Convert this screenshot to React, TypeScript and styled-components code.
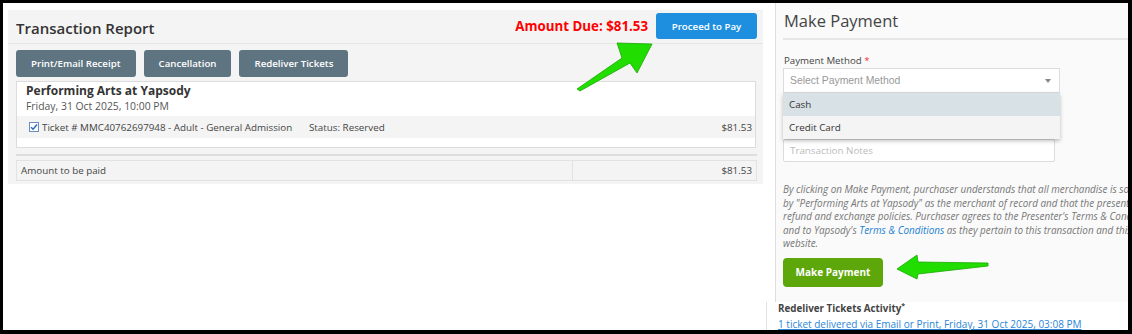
import React from "react";
import styled, { createGlobalStyle } from "styled-components";

const GlobalStyle = createGlobalStyle`
  html, body { margin: 0; padding: 0; background: #fff; }
  body { font-family: "Open Sans", "Liberation Sans", sans-serif; color: #333; }
  * { box-sizing: border-box; }
`;

const Frame = styled.div`
  position: relative;
  width: 1132px;
  height: 334px;
  border-style: solid;
  border-color: #000;
  border-width: 3px 4px 4px 3px;
  background: #fff;
  overflow: hidden;
`;

const Layout = styled.div`
  display: flex;
  height: 100%;
`;

const LeftColumn = styled.div`
  width: 763px;
  flex: none;
  padding: 7px 0 0 5px;
`;

const ReportPanel = styled.section`
  width: 755px;
  background: #f4f4f4;
  padding-bottom: 3px;
`;

const ReportHeader = styled.div`
  display: flex;
  align-items: center;
  height: 34px;
  padding: 0 6px 1px 8px;
  border-bottom: 1px solid #e6e6e6;
`;

const Title = styled.h2`
  margin: 0;
  flex: 1;
  font-size: 15px;
  font-weight: 600;
  color: #333;
  padding-top: 3px;
`;

const AmountDue = styled.span`
  font-size: 13.3px;
  font-weight: 700;
  color: #f00;
  margin-right: 8px;
`;

const Button = styled.button<{ $tone: "blue" | "slate" | "green" }>`
  border: none;
  border-radius: 3px;
  color: #fff;
  font-family: "Open Sans", sans-serif;
  font-weight: 600;
  font-size: 9.7px;
  white-space: nowrap;
  cursor: pointer;
  padding: 0 15px;
  background: ${(p) =>
    p.$tone === "blue" ? "#1e8fdf" : p.$tone === "green" ? "#5ea70a" : "#5e7481"};
`;

const PayButton = styled(Button)`
  width: 101px;
  height: 26px;
  padding: 0;
`;

const ActionBar = styled.div`
  display: flex;
  gap: 8px;
  padding: 6px 8px 0;
`;

const ActionButton = styled(Button)`
  height: 27px;
`;

const EventCard = styled.div`
  margin: 4px 7px 0 8px;
  background: #fff;
  border: 1px solid #dcdcdc;
  padding-bottom: 9px;
`;

const EventHead = styled.div`
  padding: 0 10px 2px 9px;
`;

const EventName = styled.div`
  font-size: 12px;
  font-weight: 700;
  color: #333;
  line-height: 17px;
`;

const EventDate = styled.div`
  font-size: 10.4px;
  color: #555;
  line-height: 15px;
`;

const TicketRow = styled.div`
  display: flex;
  align-items: center;
  height: 22px;
  background: #f4f4f4;
  padding: 0 3px 0 12px;
  font-size: 9.8px;
  color: #444;
  white-space: nowrap;
`;

const Check = styled.span`
  width: 10px;
  height: 10px;
  border: 1px solid #6c8ebf;
  background: #fff;
  display: inline-flex;
  align-items: center;
  justify-content: center;
  margin-right: 3px;
`;

const TicketText = styled.span`
  width: 267px;
`;

const Amount = styled.span`
  margin-left: auto;
`;

const Divider = styled.div`
  margin: 6px 6px 0 8px;
  height: 2px;
  background: #dedede;
`;

const TotalRow = styled.div`
  display: grid;
  grid-template-columns: 555px 1fr;
  margin: 4px 6px 0 8px;
  height: 21px;
  border: 1px solid #e2e2e2;
  font-size: 9.8px;
  color: #444;
`;

const TotalCell = styled.div<{ $right?: boolean }>`
  display: flex;
  align-items: center;
  padding: 0 4px;
  justify-content: ${(p) => (p.$right ? "flex-end" : "flex-start")};
  border-left: ${(p) => (p.$right ? "1px solid #e2e2e2" : "none")};
`;

const RightColumn = styled.div`
  flex: 1;
  display: flex;
  flex-direction: column;
  min-width: 0;
`;

const PaymentPanel = styled.section`
  flex: 1;
  margin-left: 9px;
  border-left: 1px solid #dedede;
  background: #fafafa;
  padding-left: 7px;
  position: relative;
`;

const PanelTitle = styled.h2`
  margin: 0;
  font-size: 16.5px;
  font-weight: 400;
  color: #444;
  height: 37px;
  line-height: 36px;
  padding-left: 1px;
  border-bottom: 2px solid #e6e6e6;
`;

const FieldLabel = styled.div`
  margin-top: 13px;
  font-size: 9.7px;
  color: #444;
  line-height: 15px;
  padding-left: 1px;
`;

const Required = styled.span`
  color: #e33;
`;

const SelectBox = styled.div`
  width: 277px;
  height: 25px;
  background: #fff;
  border: 1px solid #dcdcdc;
  display: flex;
  align-items: center;
  padding: 0 8px 0 6px;
  font-family: "Liberation Sans", Arial, sans-serif;
  font-size: 10.4px;
  color: #999;
`;

const Caret = styled.span`
  margin-left: auto;
  width: 0;
  height: 0;
  border-left: 3.5px solid transparent;
  border-right: 3.5px solid transparent;
  border-top: 4px solid #888;
`;

const Dropdown = styled.ul`
  position: absolute;
  left: 7px;
  top: 90px;
  width: 277px;
  margin: 0;
  padding: 0;
  list-style: none;
  box-shadow: 0 2px 4px rgba(0, 0, 0, 0.25);
  z-index: 2;
`;

const Option = styled.li<{ $active?: boolean }>`
  height: 23px;
  line-height: 23px;
  padding-left: 6px;
  font-size: 9.8px;
  color: #333;
  background: ${(p) => (p.$active ? "#d7e1e6" : "#f4f4f4")};
`;

const NotesBox = styled.div`
  margin-top: 46px;
  width: 272px;
  height: 23px;
  background: #fff;
  border: 1px solid #dcdcdc;
  border-radius: 2px;
  padding: 0 6px;
  font-size: 9.8px;
  line-height: 21px;
  color: #bbb;
`;

const Disclaimer = styled.p`
  margin: 21px 0 0;
  font-size: 9.9px;
  font-style: italic;
  color: #777;
  line-height: 13.6px;
  white-space: nowrap;
`;

const TermsLink = styled.a`
  color: #1a7fd1;
  text-decoration: none;
`;

const MakePayButton = styled(Button)`
  margin-top: 7px;
  width: 100px;
  height: 29px;
  padding: 0;
  border-radius: 4px;
  font-size: 10px;
  font-weight: 700;
`;

const ActivitySection = styled.section`
  height: 28px;
  border-left: 1px solid #e2e2e2;
  padding-left: 11px;
  background: #fff;
  white-space: nowrap;
`;

const ActivityTitle = styled.div`
  font-size: 9.8px;
  font-weight: 700;
  color: #444;
  line-height: 13px;

  sup {
    font-size: 7px;
    line-height: 0;
  }
`;

const ActivityLink = styled.a`
  display: block;
  margin-top: 3px;
  font-size: 10px;
  color: #2b86d6;
  text-decoration: underline;
  text-underline-offset: 1px;
  line-height: 12px;
`;

const Overlay = styled.svg`
  position: absolute;
  left: -3px;
  top: -3px;
  pointer-events: none;
  z-index: 5;
`;

export default function App() {
  return (
    <>
      <GlobalStyle />
      <Frame>
        <Layout>
          <LeftColumn>
            <ReportPanel>
              <ReportHeader>
                <Title>Transaction Report</Title>
                <AmountDue>Amount Due: $81.53</AmountDue>
                <PayButton $tone="blue">Proceed to Pay</PayButton>
              </ReportHeader>
              <ActionBar>
                <ActionButton $tone="slate">Print/Email Receipt</ActionButton>
                <ActionButton $tone="slate">Cancellation</ActionButton>
                <ActionButton $tone="slate">Redeliver Tickets</ActionButton>
              </ActionBar>
              <EventCard>
                <EventHead>
                  <EventName>Performing Arts at Yapsody</EventName>
                  <EventDate>Friday, 31 Oct 2025, 10:00 PM</EventDate>
                </EventHead>
                <TicketRow>
                  <Check>
                    <svg width="8" height="8" viewBox="0 0 8 8">
                      <path d="M1 4.2 L3.1 6.2 L7 1.6" fill="none" stroke="#1f6fc4" strokeWidth="1.5" />
                    </svg>
                  </Check>
                  <TicketText>Ticket # MMC40762697948 - Adult - General Admission</TicketText>
                  <span>Status: Reserved</span>
                  <Amount>$81.53</Amount>
                </TicketRow>
              </EventCard>
              <Divider />
              <TotalRow>
                <TotalCell>Amount to be paid</TotalCell>
                <TotalCell $right>$81.53</TotalCell>
              </TotalRow>
            </ReportPanel>
          </LeftColumn>
          <RightColumn>
            <PaymentPanel>
              <PanelTitle>Make Payment</PanelTitle>
              <FieldLabel>
                Payment Method <Required>*</Required>
              </FieldLabel>
              <SelectBox>
                Select Payment Method
                <Caret />
              </SelectBox>
              <Dropdown>
                <Option $active>Cash</Option>
                <Option>Credit Card</Option>
              </Dropdown>
              <NotesBox>Transaction Notes</NotesBox>
              <Disclaimer>
                By clicking on Make Payment, purchaser understands that all merchandise is sold
                <br />
                by "Performing Arts at Yapsody" as the merchant of record and that the presenter's
                <br />
                refund and exchange policies. Purchaser agrees to the Presenter's Terms &amp; Conditions
                <br />
                and to Yapsody's <TermsLink>Terms &amp; Conditions</TermsLink> as they pertain to this transaction and this
                <br />
                website.
              </Disclaimer>
              <MakePayButton $tone="green">Make Payment</MakePayButton>
            </PaymentPanel>
            <ActivitySection>
              <ActivityTitle>
                Redeliver Tickets Activity<sup>*</sup>
              </ActivityTitle>
              <ActivityLink>1 ticket delivered via Email or Print, Friday, 31 Oct 2025, 03:08 PM</ActivityLink>
            </ActivitySection>
          </RightColumn>
        </Layout>
        <Overlay width="1132" height="334" viewBox="0 0 1132 334">
          <polygon
            points="577,89 622,58 617,43 652,44 637,73 630,63 580,91"
            fill="#22dd00"
            stroke="#17a800"
            strokeWidth="0.8"
            strokeLinejoin="round"
          />
          <polygon
            points="988,263 918,262 917,255 897,269 917,279 918,274 988,266"
            fill="#22dd00"
            stroke="#17a800"
            strokeWidth="0.8"
            strokeLinejoin="round"
          />
        </Overlay>
      </Frame>
    </>
  );
}
